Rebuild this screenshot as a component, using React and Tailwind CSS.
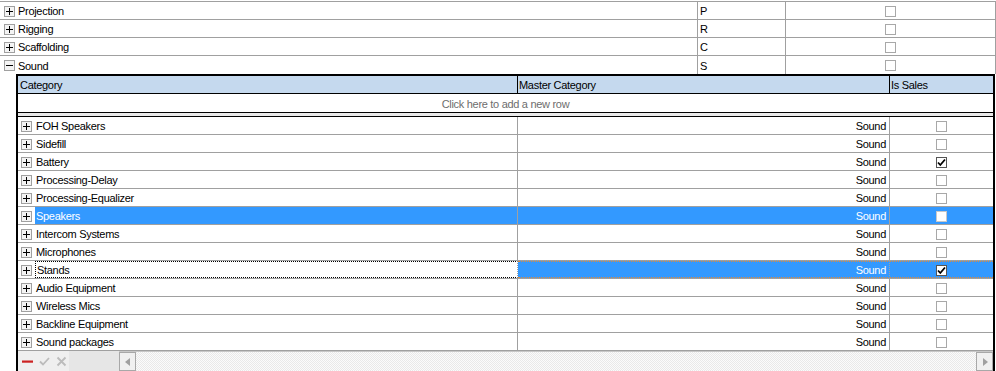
import React from 'react';

const TOP_ROWS = [
  { name: 'Projection', code: 'P' },
  { name: 'Rigging', code: 'R' },
  { name: 'Scaffolding', code: 'C' },
];

const CHILD_ROWS = [
  { name: 'FOH Speakers' },
  { name: 'Sidefill' },
  { name: 'Battery', checked: true },
  { name: 'Processing-Delay' },
  { name: 'Processing-Equalizer' },
  { name: 'Speakers', state: 'selected' },
  { name: 'Intercom Systems' },
  { name: 'Microphones' },
  { name: 'Stands', checked: true, state: 'focus' },
  { name: 'Audio Equipment' },
  { name: 'Wireless Mics' },
  { name: 'Backline Equipment' },
  { name: 'Sound packages' },
];

function ExpandBox({ open }) {
  return (
    <div className="w-[11px] h-[11px] border border-[#a0a0a0] bg-[#f4f4f4] flex items-center justify-center">
      <svg width="7" height="7" viewBox="0 0 7 7">
        <rect x="0" y="3" width="7" height="1" fill="#000" />
        {!open && <rect x="3" y="0" width="1" height="7" fill="#000" />}
      </svg>
    </div>
  );
}

function CheckBox({ checked, light }) {
  return (
    <div
      className={`w-[11px] h-[11px] border bg-white flex items-center justify-center ${
        checked ? 'border-[#555]' : light ? 'border-[#c8c8c8]' : 'border-[#a8a8a8]'
      }`}
    >
      {checked && (
        <svg width="9" height="9" viewBox="0 0 9 9">
          <path d="M1 4.5 L3.3 7 L8 1.5" stroke="#000" strokeWidth="1.8" fill="none" />
        </svg>
      )}
    </div>
  );
}

function ChildRow({ row }) {
  const selected = row.state === 'selected';
  const focus = row.state === 'focus';
  return (
    <div className="flex h-[18px] border-b border-[#a0a0a0]">
      <div className="w-[17px] shrink-0 flex items-center justify-center pt-px">
        <ExpandBox />
      </div>
      <div
        className={`w-[483px] shrink-0 flex items-center pt-[2px] pl-px border-r border-[#a0a0a0] ${
          selected ? 'bg-[#3399ff] text-white' : ''
        } ${focus ? 'border-y border-l border-y-black border-l-black border-dotted' : ''}`}
      >
        {row.name}
      </div>
      <div
        className={`w-[372px] shrink-0 flex items-center justify-end pt-[2px] pr-[3px] border-r border-r-[#a0a0a0] ${
          selected ? 'bg-[#3399ff] text-white' : ''
        } ${focus ? 'bg-[#3399ff] text-white border-y border-dotted border-y-[#e08a3c]' : ''}`}
      >
        Sound
      </div>
      <div
        className={`flex-1 flex items-center justify-center pt-px ${selected ? 'bg-[#3399ff]' : ''} ${
          focus ? 'bg-[#3399ff] border-y border-dotted border-y-[#e08a3c]' : ''
        }`}
      >
        <CheckBox checked={row.checked} light={selected} />
      </div>
    </div>
  );
}

function TopRow({ name, code, open, last }) {
  return (
    <div className={`flex h-[18px] ${last ? '' : 'border-b border-[#a0a0a0]'}`}>
      <div className="w-[698px] shrink-0 flex items-center border-r border-[#a0a0a0]">
        <div className="w-[18px] shrink-0 flex justify-center pl-px pt-px">
          <ExpandBox open={open} />
        </div>
        <span className="pt-[2px]">{name}</span>
      </div>
      <div className="w-[88px] shrink-0 flex items-center pt-[2px] pl-[2px] border-r border-[#a0a0a0]">{code}</div>
      <div className="flex-1 flex items-center justify-center pt-px border-r border-[#a0a0a0]">
        <CheckBox />
      </div>
    </div>
  );
}

export default function App() {
  return (
    <div
      className="w-[996px] h-[371px] overflow-hidden bg-white text-black text-[11px] tracking-[-0.3px] pt-px"
      style={{ fontFamily: '"Liberation Sans", Arial, sans-serif' }}
    >
      <div className="border-t border-[#a0a0a0]">
        {TOP_ROWS.map((r) => (
          <TopRow key={r.name} name={r.name} code={r.code} />
        ))}
        <TopRow name="Sound" code="S" open last />
      </div>

      <div className="ml-[16px] w-[979px] border-x-2 border-t-2 border-black">
        <div className="flex h-[18px] bg-[#c5d9ee] border-b border-black">
          <div className="w-[500px] shrink-0 flex items-center pt-[2px] pl-[2px] border-r border-black">Category</div>
          <div className="w-[372px] shrink-0 flex items-center pt-[2px] pl-px border-r border-black">Master Category</div>
          <div className="flex-1 flex items-center pt-[2px] pl-px">Is Sales</div>
        </div>
        <div className="h-[19px] flex items-center justify-center pt-[2px] text-[#6d6d6d] border-b border-black">
          Click here to add a new row
        </div>
        <div className="h-[4px] bg-[#e8e8e8] border-b border-black" />
        {CHILD_ROWS.map((row) => (
          <ChildRow key={row.name} row={row} />
        ))}
        <div className="flex h-[20px] bg-[#efefef]">
          <div className="w-[51px] shrink-0 flex items-center gap-[6px] pl-[4px]">
            <svg width="11" height="11" viewBox="0 0 11 11">
              <rect x="0" y="4.5" width="11" height="2.2" fill="#cc2222" />
            </svg>
            <svg width="11" height="11" viewBox="0 0 11 11">
              <path d="M1 5.5 L4 8.5 L10 2" stroke="#bcbcbc" strokeWidth="1.8" fill="none" />
            </svg>
            <svg width="11" height="11" viewBox="0 0 11 11">
              <path d="M1.5 1.5 L9.5 9.5 M9.5 1.5 L1.5 9.5" stroke="#bcbcbc" strokeWidth="1.8" />
            </svg>
          </div>
          <div className="w-[50px] shrink-0 bg-[#e6e6e6]" />
          <div className="flex-1 flex border-t border-[#c8c8c8] bg-[image:repeating-conic-gradient(#e9e9e9_0_25%,#fbfbfb_0_50%)] bg-[length:2px_2px]">
            <div className="w-[17px] h-full border border-[#a8a8a8] bg-[#f0f0f0] flex items-center justify-center">
              <svg width="6" height="8" viewBox="0 0 6 8">
                <path d="M5 0 L0 4 L5 8 Z" fill="#a0a0a0" />
              </svg>
            </div>
            <div className="flex-1" />
            <div className="w-[17px] h-full border border-[#a8a8a8] bg-[#f0f0f0] flex items-center justify-center">
              <svg width="6" height="8" viewBox="0 0 6 8">
                <path d="M1 0 L6 4 L1 8 Z" fill="#a0a0a0" />
              </svg>
            </div>
          </div>
        </div>
      </div>
    </div>
  );
}
